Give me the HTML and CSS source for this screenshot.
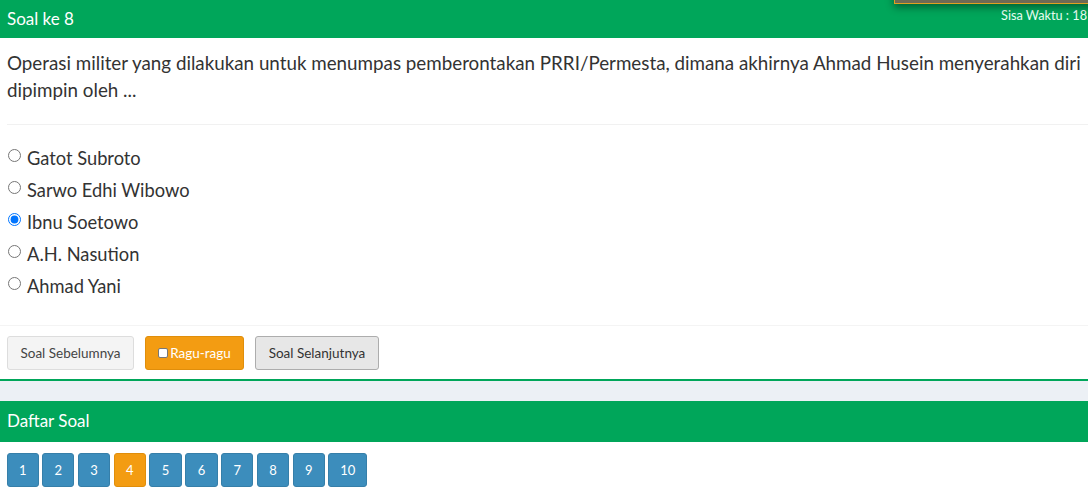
FILE: index.html
```html
<!DOCTYPE html>
<html>
<head>
<meta charset="utf-8">
<link rel="stylesheet" href="styles.css">
</head>
<body>
<div class="page">
  <div class="timer-panel"></div>
  <section class="box box-question">
    <div class="box-header">
      <h3 class="box-title">Soal ke 8</h3>
      <span class="time-left">Sisa Waktu : 18</span>
    </div>
    <div class="box-body">
      <p class="question">Operasi militer yang dilakukan untuk menumpas pemberontakan PRRI/Permesta, dimana akhirnya Ahmad Husein menyerahkan diri dipimpin oleh ...</p>
      <div class="options">
        <label class="option"><input type="radio" name="jawab"> Gatot Subroto</label>
        <label class="option"><input type="radio" name="jawab"> Sarwo Edhi Wibowo</label>
        <label class="option"><input type="radio" name="jawab" checked> Ibnu Soetowo</label>
        <label class="option"><input type="radio" name="jawab"> A.H. Nasution</label>
        <label class="option"><input type="radio" name="jawab"> Ahmad Yani</label>
      </div>
    </div>
    <div class="box-footer">
      <button class="btn btn-default">Soal Sebelumnya</button>
      <button class="btn btn-warning"><span class="check"></span>Ragu-ragu</button>
      <button class="btn btn-next">Soal Selanjutnya</button>
    </div>
  </section>
  <div class="gap"></div>
  <section class="box box-list">
    <div class="box-header">
      <h3 class="box-title">Daftar Soal</h3>
    </div>
    <div class="number-list">
      <button class="num num-first">1</button>
      <button class="num">2</button>
      <button class="num">3</button>
      <button class="num num-doubt">4</button>
      <button class="num">5</button>
      <button class="num">6</button>
      <button class="num">7</button>
      <button class="num">8</button>
      <button class="num">9</button>
      <button class="num num-wide">10</button>
    </div>
  </section>
</div>
</body>
</html>
```

FILE: styles.css
```css
html, body {
  margin: 0;
  padding: 0;
  overflow: hidden;
  background: #fff;
}
body {
  font-family: Lato, "Open Sans", sans-serif;
  color: #333;
}
.page {
  position: relative;
  width: 1100px;
}
.timer-panel {
  position: absolute;
  top: -30px;
  left: 894px;
  width: 260px;
  height: 32px;
  background: #6e6a55;
  border: 1px solid #e0a020;
  box-shadow: 0 3px 8px rgba(0,0,0,0.45);
  z-index: 2;
}
.box-header {
  background: #00a65a;
  color: #fff;
  display: flex;
  justify-content: space-between;
  align-items: flex-start;
}
.box-question .box-header {
  height: 38px;
}
.box-title {
  margin: 0;
  font-weight: 400;
  font-size: 17px;
  line-height: 38px;
  padding-left: 7px;
}
.time-left {
  font-size: 12.7px;
  line-height: 14px;
  padding-top: 8px;
  text-align: right;
  margin-right: 13px;
  color: #eafff3;
}
.box-body {
  padding: 0 7px;
}
.question {
  margin: 0;
  padding: 11px 0 21px;
  font-size: 18.8px;
  line-height: 27px;
  border-bottom: 1px solid #f1f1f1;
}
.options {
  padding: 17px 0 23px;
}
.option {
  display: flex;
  align-items: center;
  height: 32px;
  font-size: 18.3px;
  gap: 6px;
  margin-left: 1px;
}
.option input {
  margin: 0 0 6px 0;
  width: 13px;
  height: 13px;
}
.box-footer {
  border-top: 1px solid #f4f4f4;
  border-bottom: 2px solid #00a65a;
  padding: 10px 7px 9px;
  display: flex;
  gap: 11px;
}
.btn {
  font-family: inherit;
  font-size: 13.5px;
  height: 34px;
  padding: 0 12px;
  border-radius: 3px;
  border: 1px solid #ddd;
  color: #444;
  cursor: pointer;
  display: inline-flex;
  align-items: center;
}
.btn-default {
  background: #f4f4f4;
  width: 127px;
  justify-content: center;
}
.btn-warning {
  background: #f39c12;
  border-color: #e08e0b;
  color: #fff;
  width: 99px;
  justify-content: center;
}
.check {
  display: inline-block;
  width: 8px;
  height: 8px;
  background: #fff;
  border: 1px solid #777;
  border-radius: 2px;
  margin-right: 2px;
}
.btn-next {
  background: #e7e7e7;
  border-color: #adadad;
  color: #333;
  width: 124px;
  justify-content: center;
}
.gap {
  height: 20px;
  background: #ecf0f5;
}
.box-list .box-header {
  height: 41px;
}
.box-list .box-title {
  line-height: 40px;
}
.number-list {
  display: flex;
  gap: 3.3px;
  padding: 11px 7px;
}
.num {
  font-family: inherit;
  width: 32.5px;
  height: 34px;
  background: #3c8dbc;
  border: 1px solid #367fa9;
  border-radius: 3px;
  color: #fff;
  font-size: 13px;
  padding: 0;
}
.num-first {
  width: 31.7px;
}
.num-doubt {
  background: #f39c12;
  border-color: #e08e0b;
}
.num-wide {
  width: 38.7px;
}
```
